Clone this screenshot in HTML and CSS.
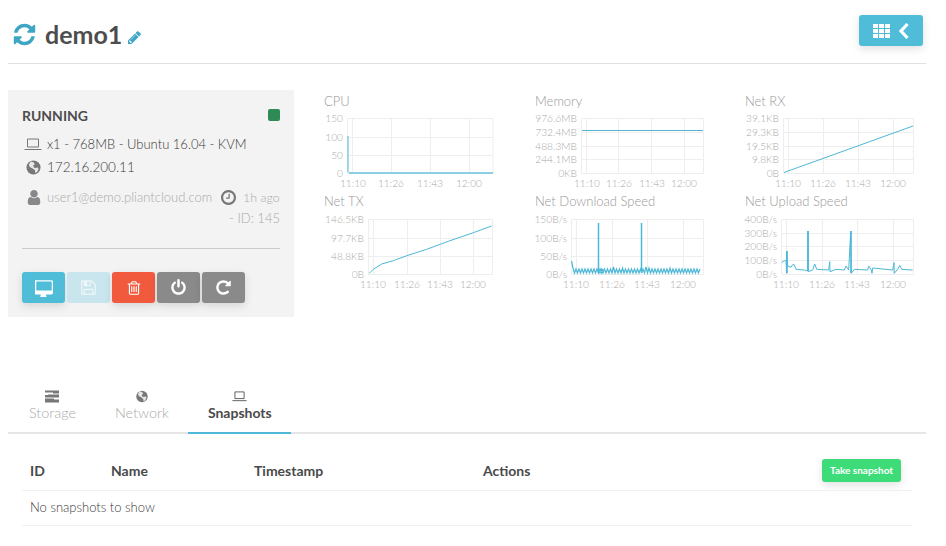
FILE: index.html
```html
<!DOCTYPE html>
<html lang="en">
<head>
<meta charset="utf-8">
<title>demo1</title>
<link rel="stylesheet" href="styles.css">
</head>
<body>
<div class="page">
  <header class="head">
    <div class="title">
      <svg class="i-refresh" viewBox="0 0 1792 1792"><path d="M1639 1056q0 5-1 7-64 268-268 434.500t-478 166.500q-146 0-282.500-55t-243.500-157l-129 129q-19 19-45 19t-45-19-19-45v-448q0-26 19-45t45-19h448q26 0 45 19t19 45-19 45l-137 137q71 66 161 102t187 36q134 0 250-65t186-179q11-17 53-117 8-23 30-23h192q13 0 22.500 9.500t9.500 22.500zm25-800v448q0 26-19 45t-45 19h-448q-26 0-45-19t-19-45 19-45l138-138q-148-137-349-137-134 0-250 65t-186 179q-11 17-53 117-8 23-30 23h-199q-13 0-22.500-9.500t-9.500-22.500v-7q65-268 270-434.500t480-166.500q146 0 284 55.500t245 156.500l130-129q19-19 45-19t45 19 19 45z"/></svg>
      <h1>demo1</h1>
      <svg class="i-pencil" viewBox="128 128 1536 1536"><path d="M491 1536l91-91-235-235-91 91v107h128v128h107zm523-928q0-22-22-22-10 0-17 7l-542 542q-7 7-7 17 0 22 22 22 10 0 17-7l542-542q7-7 7-17zm-54-192l416 416-832 832h-416v-416zm683 96q0 53-37 90l-166 166-416-416 166-165q36-38 90-38 53 0 91 38l235 234q37 39 37 91z"/></svg>
    </div>
    <button class="btn menu-btn" type="button">
      <svg class="i-th" viewBox="0 0 17 14"><path d="M0 0h5v4H0zM6 0h5v4H6zM12 0h5v4h-5zM0 5h5v4H0zM6 5h5v4H6zM12 5h5v4h-5zM0 10h5v4H0zM6 10h5v4H6zM12 10h5v4h-5z"/></svg>
      <svg class="i-chev" viewBox="0 0 11 16"><path d="M9.500 1L3 8l6.500 7"/></svg>
    </button>
  </header>

  <section class="main">
    <aside class="panel">
      <div class="status"><strong>RUNNING</strong><span class="dot"></span></div>
      <div class="info">
        <svg class="i-laptop" viewBox="0 0 18 13"><path d="M3.500 1h11v8h-11z"/><path d="M.5 11.500h17"/></svg>
        <span>x1 - 768MB - Ubuntu 16.04 - KVM</span>
      </div>
      <div class="info ip">
        <svg class="i-globe" viewBox="0 0 16 16"><circle cx="8" cy="8" r="7.500"/><path class="land" d="M5 1.500l3 1 1.500 2L7.500 6 9 8.500l3.500-.5 1 1.500-1.500 3-2 1.500-.5-3L7 9 4 7.500 3 5z"/></svg>
        <span>172.16.200.11</span>
      </div>
      <div class="meta">
        <svg class="i-user" viewBox="256 128 1280 1536"><path d="M1536 1399q0 109-62.500 187t-150.500 78h-854q-88 0-150.500-78t-62.500-187q0-85 8.500-160.500t31.500-152 58.500-131 94-89 134.500-34.500q131 128 313 128t313-128q76 0 134.500 34.500t94 89 58.500 131 31.500 152 8.500 160.500zm-256-887q0 159-112.500 271.500t-271.500 112.500-271.500-112.500-112.500-271.500 112.500-271.500 271.500-112.500 271.500 112.500 112.500 271.500z"/></svg>
        <span>user1@demo.pliantcloud.com</span>
        <svg class="i-clock" viewBox="128 128 1536 1536"><path d="M1024 544v448q0 14-9 23t-23 9h-320q-14 0-23-9t-9-23v-64q0-14 9-23t23-9h224v-352q0-14 9-23t23-9h64q14 0 23 9t9 23zm416 352q0-148-73-273t-198-198-273-73-273 73-198 198-73 273 73 273 198 198 273 73 273-73 198-198 73-273zm224 0q0 209-103 385.500t-279.500 279.500-385.500 103-385.500-103-279.500-279.500-103-385.500 103-385.500 279.500-279.500 385.500-103 385.500 103 279.500 279.500 103 385.500z"/></svg>
        <span class="ago">1h ago</span>
      </div>
      <div class="id">- ID: 145</div>
      <div class="rule"></div>
      <div class="actions">
        <button class="btn act blue" type="button"><svg viewBox="0 0 1792 1792"><path d="M1664 1120v-832q0-13-9.500-22.500t-22.500-9.500h-1472q-13 0-22.500 9.500t-9.500 22.500v832q0 13 9.500 22.500t22.500 9.500h1472q13 0 22.500-9.500t9.500-22.500zm128-832v1088q0 66-47 113t-113 47h-544q0 37 16 77.500t32 71 16 43.500q0 26-19 45t-45 19h-512q-26 0-45-19t-19-45q0-14 16-44t32-70 16-78h-544q-66 0-113-47t-47-113v-1088q0-66 47-113t113-47h1632q66 0 113 47t47 113z"/></svg></button>
        <button class="btn act pale" type="button"><svg viewBox="0 0 1792 1792"><path d="M512 1536h768v-384h-768v384zm896 0h128v-896q0-14-10-38.500t-20-34.500l-281-281q-10-10-34-20t-39-10v416q0 40-28 68t-68 28h-576q-40 0-68-28t-28-68v-416h-128v1280h128v-416q0-40 28-68t68-28h832q40 0 68 28t28 68v416zm-384-928v-320q0-13-9.500-22.500t-22.500-9.500h-192q-13 0-22.500 9.500t-9.500 22.500v320q0 13 9.500 22.500t22.500 9.500h192q13 0 22.500-9.500t9.500-22.500zm640 32v928q0 40-28 68t-68 28h-1344q-40 0-68-28t-28-68v-1344q0-40 28-68t68-28h928q40 0 88 20t76 48l280 280q28 28 48 76t20 88z"/></svg></button>
        <button class="btn act red" type="button"><svg viewBox="0 0 1792 1792"><path d="M704 736v576q0 14-9 23t-23 9h-64q-14 0-23-9t-9-23v-576q0-14 9-23t23-9h64q14 0 23 9t9 23zm256 0v576q0 14-9 23t-23 9h-64q-14 0-23-9t-9-23v-576q0-14 9-23t23-9h64q14 0 23 9t9 23zm256 0v576q0 14-9 23t-23 9h-64q-14 0-23-9t-9-23v-576q0-14 9-23t23-9h64q14 0 23 9t9 23zm128 724v-948h-896v948q0 22 7 40.500t14.500 27 10.500 8.500h832q3 0 10.500-8.500t14.500-27 7-40.500zm-672-1076h448l-48-117q-7-9-17-11h-317q-10 2-17 11zm928 32v64q0 14-9 23t-23 9h-96v948q0 83-47 143.500t-113 60.500h-832q-66 0-113-58.500t-47-141.500v-952h-96q-14 0-23-9t-9-23v-64q0-14 9-23t23-9h309l70-167q15-37 54-63t79-26h320q40 0 79 26t54 63l70 167h309q14 0 23 9t9 23z"/></svg></button>
        <button class="btn act grey" type="button"><svg viewBox="0 0 1792 1792"><path d="M1664 896q0 156-61 298t-164 245-245 164-298 61-298-61-245-164-164-245-61-298q0-182 80.500-343t226.500-270q43-32 95.500-25t83.500 50q32 42 24.500 94.500t-49.500 84.500q-98 74-151.500 181t-53.500 228q0 104 40.500 198.500t109.500 163.500 163.500 109.500 198.500 40.500 198.500-40.500 163.500-109.500 109.500-163.500 40.500-198.500q0-121-53.500-228t-151.500-181q-42-32-49.500-84.500t24.500-94.500q31-43 84-50t95 25q146 109 226.500 270t80.500 343zm-640-768v640q0 52-38 90t-90 38-90-38-38-90v-640q0-52 38-90t90-38 90 38 38 90z"/></svg></button>
        <button class="btn act grey" type="button"><svg viewBox="0 0 1792 1792"><path d="M1664 256v448q0 26-19 45t-45 19h-448q-42 0-59-40-17-39 14-69l138-138q-148-137-349-137-104 0-198.500 40.500t-163.500 109.500-109.500 163.500-40.500 198.500 40.500 198.500 109.500 163.500 163.500 109.500 198.500 40.500q119 0 225-52t179-147q7-10 23-12 15 0 25 9l137 138q9 8 9.500 20.500t-7.500 22.500q-109 132-264 204.500t-327 72.500q-156 0-298-61t-245-164-164-245-61-298 61-298 164-245 245-164 298-61q147 0 284.500 55.500t244.500 156.500l130-129q29-31 70-14 39 17 39 59z"/></svg></button>
      </div>
    </aside>

    <div class="charts">
      <figure class="chart">
        <figcaption>CPU</figcaption>
        <svg viewBox="0 0 210 82">
          <path class="grid" d="M23.500 8.500h145.500v55H23.500zM23.500 27.500h145.500M23.500 45.500h145.500M28.500 8v55M67.500 8v55M106.500 8v55M145.500 8v55"/>
          <path class="line" d="M24 26v36.500"/>
          <path class="line base" d="M25 63h144"/>
          <g class="ax ya"><text x="19" y="12">150</text><text x="19" y="31">100</text><text x="19" y="49">50</text><text x="19" y="67">0</text></g>
          <g class="ax xa"><text x="29" y="77">11:10</text><text x="67" y="77">11:26</text><text x="106" y="77">11:43</text><text x="145" y="77">12:00</text></g>
        </svg>
      </figure>
      <figure class="chart">
        <figcaption>Memory</figcaption>
        <svg viewBox="0 0 210 82">
          <path class="grid" d="M46.500 8.500h122v55h-122zM46.500 22.500h122M46.500 36.500h122M46.500 49.500h122M51.500 8v55M83.500 8v55M116.500 8v55M149.500 8v55"/>
          <path class="line flat" d="M47 20.500h121"/>
          <g class="ax ya"><text x="42" y="12">976.6MB</text><text x="42" y="26">732.4MB</text><text x="42" y="40">488.3MB</text><text x="42" y="53">244.1MB</text><text x="42" y="67">0KB</text></g>
          <g class="ax xa"><text x="52" y="77">11:10</text><text x="84" y="77">11:26</text><text x="117" y="77">11:43</text><text x="149" y="77">12:00</text></g>
        </svg>
      </figure>
      <figure class="chart">
        <figcaption>Net RX</figcaption>
        <svg viewBox="0 0 210 82">
          <path class="grid" d="M38.500 8.500h130v55h-130zM38.500 22.500h130M38.500 36.500h130M38.500 49.500h130M43.500 8v55M78.500 8v55M113.500 8v55M148.500 8v55"/>
          <path class="line" d="M39 62.500L168 16"/>
          <g class="ax ya"><text x="34" y="12">39.1KB</text><text x="34" y="26">29.3KB</text><text x="34" y="40">19.5KB</text><text x="34" y="53">9.8KB</text><text x="34" y="67">0B</text></g>
          <g class="ax xa"><text x="43" y="77">11:10</text><text x="78" y="77">11:26</text><text x="113" y="77">11:43</text><text x="148" y="77">12:00</text></g>
        </svg>
      </figure>
      <figure class="chart">
        <figcaption>Net TX</figcaption>
        <svg viewBox="0 0 210 82">
          <path class="grid" d="M44.500 9.500h124v55h-124zM44.500 28.500h124M44.500 46.500h124M49.500 9v55M83.500 9v55M116.500 9v55M149.500 9v55"/>
          <path class="line" d="M45.300 63.300L49.300 59.300 57.700 54 69.300 50.700 82.700 45.700 102.700 39.300 126 30.700 149.300 22.700 167.700 16"/>
          <g class="ax ya"><text x="40" y="13">146.5KB</text><text x="40" y="32">97.7KB</text><text x="40" y="50">48.8KB</text><text x="40" y="68">0B</text></g>
          <g class="ax xa"><text x="49" y="78">11:10</text><text x="83" y="78">11:26</text><text x="116" y="78">11:43</text><text x="149" y="78">12:00</text></g>
        </svg>
      </figure>
      <figure class="chart">
        <figcaption>Net Download Speed</figcaption>
        <svg viewBox="0 0 210 82">
          <path class="grid" d="M36.500 9.500h132v55h-132zM36.500 28.500h132M36.500 46.500h132M41.500 9v55M77.500 9v55M112.500 9v55M148.500 9v55"/>
          <path class="line noise" d="M36.500 51L38 58l1.500 5 1.500-4 1.500 4 1.500-4 1.500 4 1.500-4 1.500 4 1.500-4 1.500 4 1.500-4 1.500 4 1.500-4 1.500 4 1.500-4 1.500 4 1.500-4 1.500 4 1.500-4 1.500 4 1.500-4M63.500 63h1.500l1.500-4 1.500 4 1.500-4 1.500 4 1.500-4 1.500 4 1.500-4 1.500 4 1.500-6 1.500 6 1.500-4 1.500 4 1.500-4 1.500 4 1.500-5 1.500 5 1.500-4 1.500 4 1.500-4 1.500 4 1.500-4 1.500 4 1.500-4 1.500 4 1.500-4 1.500 4 1.500-4 1.500 4M106.500 63l1.500-4 1.500 4 1.500-6 1.500 6 1.500-5 1.500 5 1.500-4 1.500 4 1.500-4 1.500 4 1.500-4 1.500 4 1.500-4 1.500 4 1.500-4 1.500 4 1.500-4 1.500 4 1.500-5 1.500 5 1.500-4 1.500 4 1.500-4 1.500 4 1.500-4 1.500 4 1.500-4 1.500 4 1.500-4 1.500 4 1.500-4 1.500 4 1.500-4 1.500 4 1.500-4 1.500 4 1.500-4 1.500 4 1.500-4"/>
          <path class="line spike" d="M63.500 63V13M106.500 63V13"/>
          <g class="ax ya"><text x="32" y="13">150B/s</text><text x="32" y="32">100B/s</text><text x="32" y="50">50B/s</text><text x="32" y="68">0B/s</text></g>
          <g class="ax xa"><text x="41" y="78">11:10</text><text x="77" y="78">11:26</text><text x="112" y="78">11:43</text><text x="148" y="78">12:00</text></g>
        </svg>
      </figure>
      <figure class="chart">
        <figcaption>Net Upload Speed</figcaption>
        <svg viewBox="0 0 210 82">
          <path class="grid" d="M36.500 9.500h132v55h-132zM36.500 23.500h132M36.500 36.500h132M36.500 50.500h132M41.500 9v55M77.500 9v55M112.500 9v55M148.500 9v55"/>
          <path class="line" d="M36.700 52.700L39.300 50.700 41 50.700 41.700 63.300 41.700 41 42.700 56 46 57.300 47.700 54.700 49.300 54.700 51 59.300 59.300 60 62.700 61 63 21 63.300 61.700 67.700 60 69.700 54 71.700 59.300 83.700 60 84.700 51.700 85 61.700 91 59.300 99.300 60 101 56 103.700 60 105.700 21.300 106.300 63.300 109.300 59.300 122.700 60 123.700 56 126 59.300 127 63.300 127.700 58 147.700 60 149 52.700 149.300 63.300 152.700 59.300 154.700 55.300 156.700 59.300 167.700 60"/>
          <path class="line spike" d="M42 63V41M63 61V21M106 63V21"/>
          <g class="ax ya"><text x="32" y="13">400B/s</text><text x="32" y="27">300B/s</text><text x="32" y="40">200B/s</text><text x="32" y="54">100B/s</text><text x="32" y="68">0B/s</text></g>
          <g class="ax xa"><text x="41" y="78">11:10</text><text x="77" y="78">11:26</text><text x="112" y="78">11:43</text><text x="148" y="78">12:00</text></g>
        </svg>
      </figure>
    </div>
  </section>

  <nav class="tabs">
    <a class="tab">
      <svg viewBox="0 0 14 12"><path d="M0 0h14v3H8v-1H0zM0 4.500h3v-.5h11v3H0zM0 8h9v1h5v3H0z"/></svg>
      <span>Storage</span>
    </a>
    <a class="tab">
      <svg viewBox="0 0 16 16"><circle cx="8" cy="8" r="7"/><path class="land" d="M5 1.500l3 1 1.500 2L7.500 6 9 8.500l3.500-.5 1 1.500-1.500 3-2 1.500-.5-3L7 9 4 7.500 3 5z"/></svg>
      <span>Network</span>
    </a>
    <a class="tab active">
      <svg class="i-laptop" viewBox="0 0 18 13"><path d="M3.500 1h11v8h-11z"/><path d="M.5 11.500h17"/></svg>
      <span>Snapshots</span>
    </a>
  </nav>

  <table class="snaps">
    <thead>
      <tr>
        <th class="c-id">ID</th>
        <th class="c-name">Name</th>
        <th class="c-time">Timestamp</th>
        <th class="c-act">Actions</th>
        <th class="c-btn"><button class="btn take" type="button">Take snapshot</button></th>
      </tr>
    </thead>
    <tbody>
      <tr><td colspan="5">No snapshots to show</td></tr>
    </tbody>
  </table>
</div>
</body>
</html>
```

FILE: styles.css
```css
* { box-sizing: border-box; }
html, body { margin: 0; padding: 0; }
body {
  background: #fff;
  font-family: Lato, "Liberation Sans", sans-serif;
  font-size: 14px;
  color: #4a4a4a;
  overflow: hidden;
}
.page { width: 946px; height: 546px; padding: 0 20px 0 8px; }

.btn { border: 0; padding: 0; margin: 0; font-family: inherit; cursor: pointer; display: flex; align-items: center; justify-content: center; }

.head {
  height: 64px;
  border-bottom: 1px solid #e0e0e0;
  padding: 15px 3px 0 6px;
  display: flex;
  justify-content: space-between;
  align-items: flex-start;
}
.title { display: flex; align-items: center; height: 38px; }
.i-refresh { width: 25px; height: 25px; fill: #3fa5c4; margin-left: -2px; flex: none; }
.title h1 { margin: 0 0 0 8px; font-size: 25px; line-height: 38px; font-weight: 700; color: #4d4d4d; }
.i-pencil { width: 13px; height: 13px; fill: #3fa5c4; margin: 6px 0 0 6px; flex: none; }
.menu-btn {
  width: 64px; height: 31px;
  background: #4fbcd8;
  border-radius: 3px;
  gap: 8px;
  box-shadow: 0 3px 8px rgba(0,0,0,.12);
}
.i-th { width: 17px; height: 14px; fill: #fff; }
.i-chev { width: 11px; height: 16px; fill: none; stroke: #fff; stroke-width: 3.2; }

.main { display: flex; margin-top: 26px; height: 227px; }
.panel { width: 286px; height: 227px; background: #f3f3f3; padding: 16px 14px 0; flex: none; }
.status { display: flex; justify-content: space-between; align-items: center; height: 20px; margin-top: -1px; }
.status strong { font-size: 14px; font-weight: 700; color: #4d4d4d; }
.dot { width: 12px; height: 12px; background: #2e8b57; border-radius: 2px; }
.info { display: flex; align-items: center; height: 20px; margin-top: 9px; gap: 5px; color: #3a3a3a; font-weight: 300; font-size: 13px; }
.info.ip { margin-top: 3px; font-size: 13.5px; }
.i-laptop { width: 18px; height: 13px; margin-left: 2px; fill: none; stroke: #777; flex: none; }
.i-globe { width: 15px; height: 15px; margin: 0 1px 0 4px; flex: none; }
.i-globe circle, .tab circle { fill: #777; }
.land { fill: #e6e6e6; }
.meta { display: flex; align-items: center; height: 20px; margin-top: 10px; color: #aaa; font-weight: 300; font-size: 13px; }
.i-user { width: 14px; height: 15px; fill: #888; margin: 0 6px 0 5px; flex: none; }
.i-clock { width: 15px; height: 15px; fill: #777; margin: 0 7px 0 9px; flex: none; }
.meta span { white-space: nowrap; }
.meta .ago { font-size: 12.4px; }
.id { text-align: right; color: #aaa; font-weight: 300; font-size: 13px; height: 20px; line-height: 20px; margin-top: 1px; }
.rule { height: 1px; background: #ccc; margin-top: 20px; }
.actions { display: flex; gap: 2px; margin-top: 23px; }
.act { width: 43px; height: 31px; border-radius: 3px; box-shadow: 0 3px 8px rgba(0,0,0,.12); }
.act svg { width: 17px; height: 17px; fill: #fff; }
.blue { background: #4fbcd8; }
.act.blue svg { width: 18px; height: 18px; }
.pale { background: #c9e5ed; box-shadow: none; }
.pale svg { opacity: .7; }
.red { background: #f25a3e; }
.act.red svg { width: 16px; height: 16px; }
.grey { background: #8a8a8a; }

.charts {
  margin-left: 30px;
  display: grid;
  grid-template-columns: 211px 210px 200px;
  grid-auto-rows: 100px;
  margin-top: 2px;
}
.chart { margin: 0; }
.chart figcaption { height: 18px; line-height: 18px; font-size: 13px; font-weight: 300; color: #999; }
.chart svg { display: block; width: 210px; height: 82px; overflow: visible; }
.grid { fill: none; stroke: #eee; stroke-width: 1; }
.line { fill: none; stroke: #4db8d5; stroke-width: 1; }
.line.base { stroke: #8ccfe2; stroke-width: 2; }
.line.flat { stroke: #55b3cf; }
.line.spike { stroke-width: 1.5; }
.line.noise { stroke-width: 1.2; }
.ax text { font-family: Lato, sans-serif; font-size: 10.2px; font-weight: 300; fill: #aaa; }
.ya text { text-anchor: end; }
.xa text { text-anchor: middle; }

.tabs {
  display: flex;
  margin-top: 73px;
  height: 44px;
  padding-left: 1.5px;
  border-bottom: 2px solid #e6e6e6;
}
.tab {
  height: 44px;
  padding: 0 19.5px;
  display: flex;
  flex-direction: column;
  align-items: center;
  color: #aaa;
  font-weight: 300;
  font-size: 14.4px;
  border-bottom: 2px solid transparent;
}
.tab svg { width: 14px; height: 13px; fill: #777; display: block; margin-bottom: 1px; }
.tab span { line-height: 18px; }
.tab .i-laptop { margin-left: 0; width: 15px; fill: none; stroke: #444; }
.tab.active { color: #4a4a4a; font-weight: 700; font-size: 14px; border-bottom-color: #4db9d6; }

.snaps {
  margin: 21px 0 0 14px;
  width: 890px;
  border-collapse: collapse;
  table-layout: fixed;
}
.snaps th, .snaps td { text-align: left; padding: 0 0 0 8px; border-bottom: 1px solid #f0f0f0; }
.snaps th { height: 35px; font-weight: 700; color: #4a4a4a; padding-bottom: 4px; }
.snaps td { height: 35px; color: #3a3a3a; font-weight: 300; font-size: 13px; padding-bottom: 2px; }
.c-id { width: 81px; }
.c-name { width: 143px; }
.c-time { width: 229px; }
.c-act { width: 300px; }
.snaps .c-btn { padding: 0 11px 4px 0; }
.take {
  margin-left: auto;
  width: 79px; height: 23px;
  background: #3ddc79;
  border-radius: 3px;
  color: #fff;
  font-size: 10px;
  font-weight: 700;
  box-shadow: 0 3px 8px rgba(0,0,0,.12);
}
```
